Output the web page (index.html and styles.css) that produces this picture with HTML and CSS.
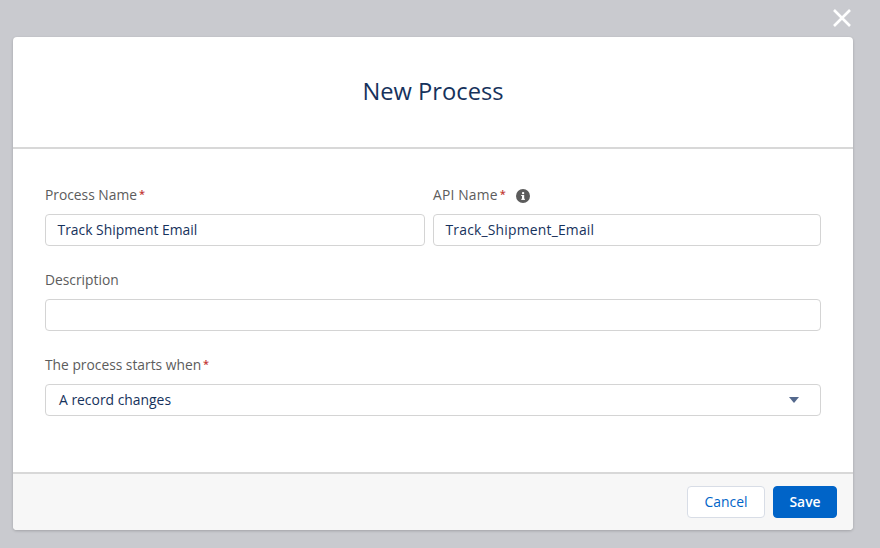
FILE: index.html
```html
<!DOCTYPE html>
<html lang="en">
<head>
<meta charset="utf-8">
<title>New Process</title>
<link rel="stylesheet" href="styles.css">
</head>
<body>
<div class="backdrop">
  <button class="close" aria-label="Close">
    <svg width="20" height="20" viewBox="0 0 20 20"><path d="M2 2 L18 18 M18 2 L2 18" stroke="#fff" stroke-width="2.6" fill="none"/></svg>
  </button>
  <div class="modal">
    <header class="modal-header"><h1>New Process</h1></header>
    <main class="modal-body">
      <div class="row">
        <div class="field field-name">
          <label class="label">Process Name<span class="req">*</span></label>
          <div class="input">Track Shipment Email</div>
        </div>
        <div class="field field-api">
          <label class="label api-label">API Name<span class="req">*</span>
            <svg class="info" width="14" height="14" viewBox="0 0 14 14"><circle cx="7" cy="7" r="7" fill="#5c5c5c"/><rect x="6" y="6" width="2.2" height="4.6" fill="#fff"/><rect x="5.2" y="6" width="2" height="1" fill="#fff"/><rect x="5.2" y="9.8" width="3.8" height="1" fill="#fff"/><circle cx="7.1" cy="4.1" r="1.2" fill="#fff"/></svg>
          </label>
          <div class="input input-api">Track_Shipment_Email</div>
        </div>
      </div>
      <div class="field">
        <label class="label">Description</label>
        <div class="input"></div>
      </div>
      <div class="field">
        <label class="label">The process starts when<span class="req">*</span></label>
        <div class="input select">A record changes<span class="caret"></span></div>
      </div>
    </main>
    <footer class="modal-footer">
      <button class="btn btn-neutral">Cancel</button>
      <button class="btn btn-brand">Save</button>
    </footer>
  </div>
</div>
</body>
</html>
```
FILE: styles.css
```css
* { box-sizing: border-box; }
html, body { margin: 0; height: 100%; }
body { font-family: "Open Sans", "Noto Sans", sans-serif; }
.backdrop {
  position: relative;
  width: 880px;
  height: 548px;
  background: #c9cacf;
  padding: 37px 27px 18px 13px;
  overflow: hidden;
}
.close {
  position: absolute;
  top: 8px;
  left: 832px;
  width: 20px;
  height: 20px;
  padding: 0;
  border: 0;
  background: none;
  display: block;
}
.close svg { display: block; }
.modal {
  width: 840px;
  height: 493px;
  background: #fff;
  border-radius: 4px;
  box-shadow: 0 1px 3px rgba(0,0,0,.2);
  display: flex;
  flex-direction: column;
  overflow: hidden;
}
.modal-header {
  height: 112px;
  border-bottom: 2px solid #d8d8d8;
  display: flex;
  align-items: center;
  justify-content: center;
  padding-bottom: 3px;
}
h1 {
  margin: 0;
  font-size: 23.7px;
  font-weight: 400;
  color: #16325c;
  line-height: 30px;
}
.modal-body {
  flex: 1;
  padding: 34px 32px 0;
  display: flex;
  flex-direction: column;
  gap: 22px;
}
.row { display: flex; gap: 8px; }
.field-name { width: 380px; }
.field-api { width: 388px; }
.label {
  display: flex;
  align-items: center;
  height: 24px;
  margin-bottom: 7px;
  font-size: 13.8px;
  line-height: 24px;
  color: #5c5c5c;
}
.api-label { letter-spacing: .2px; }
.req { color: #c23934; margin-left: 2px; font-size: 11px; margin-top: -3px; font-weight: 600; }
.info { margin-left: 10px; margin-top: 1px; }
.input {
  height: 32px;
  border: 1px solid #d4d4d4;
  border-radius: 4px;
  padding: 0 11.5px;
  font-size: 13.9px;
  line-height: 30px;
  color: #16325c;
}
.input-api { letter-spacing: .2px; }
.select {
  display: flex;
  justify-content: space-between;
  align-items: center;
  padding: 0 21px 0 13px;
}
.caret {
  width: 0;
  height: 0;
  border-left: 5px solid transparent;
  border-right: 5px solid transparent;
  border-top: 6px solid #54698d;
}
.modal-footer {
  height: 58px;
  background: #f7f7f7;
  border-top: 2px solid #d8d8d8;
  display: flex;
  justify-content: flex-end;
  align-items: center;
  gap: 8px;
  padding: 0 16px 0 0;
}
.btn {
  height: 32px;
  border-radius: 4px;
  font-family: inherit;
  font-size: 13.9px;
  line-height: 30px;
  padding: 0;
}
.btn-neutral { width: 78px; background: #fff; border: 1px solid #d8dde6; color: #0064c8; }
.btn-brand { width: 64px; background: #0064c8; border: 1px solid #0064c8; color: #fff; font-weight: 600; }
```
